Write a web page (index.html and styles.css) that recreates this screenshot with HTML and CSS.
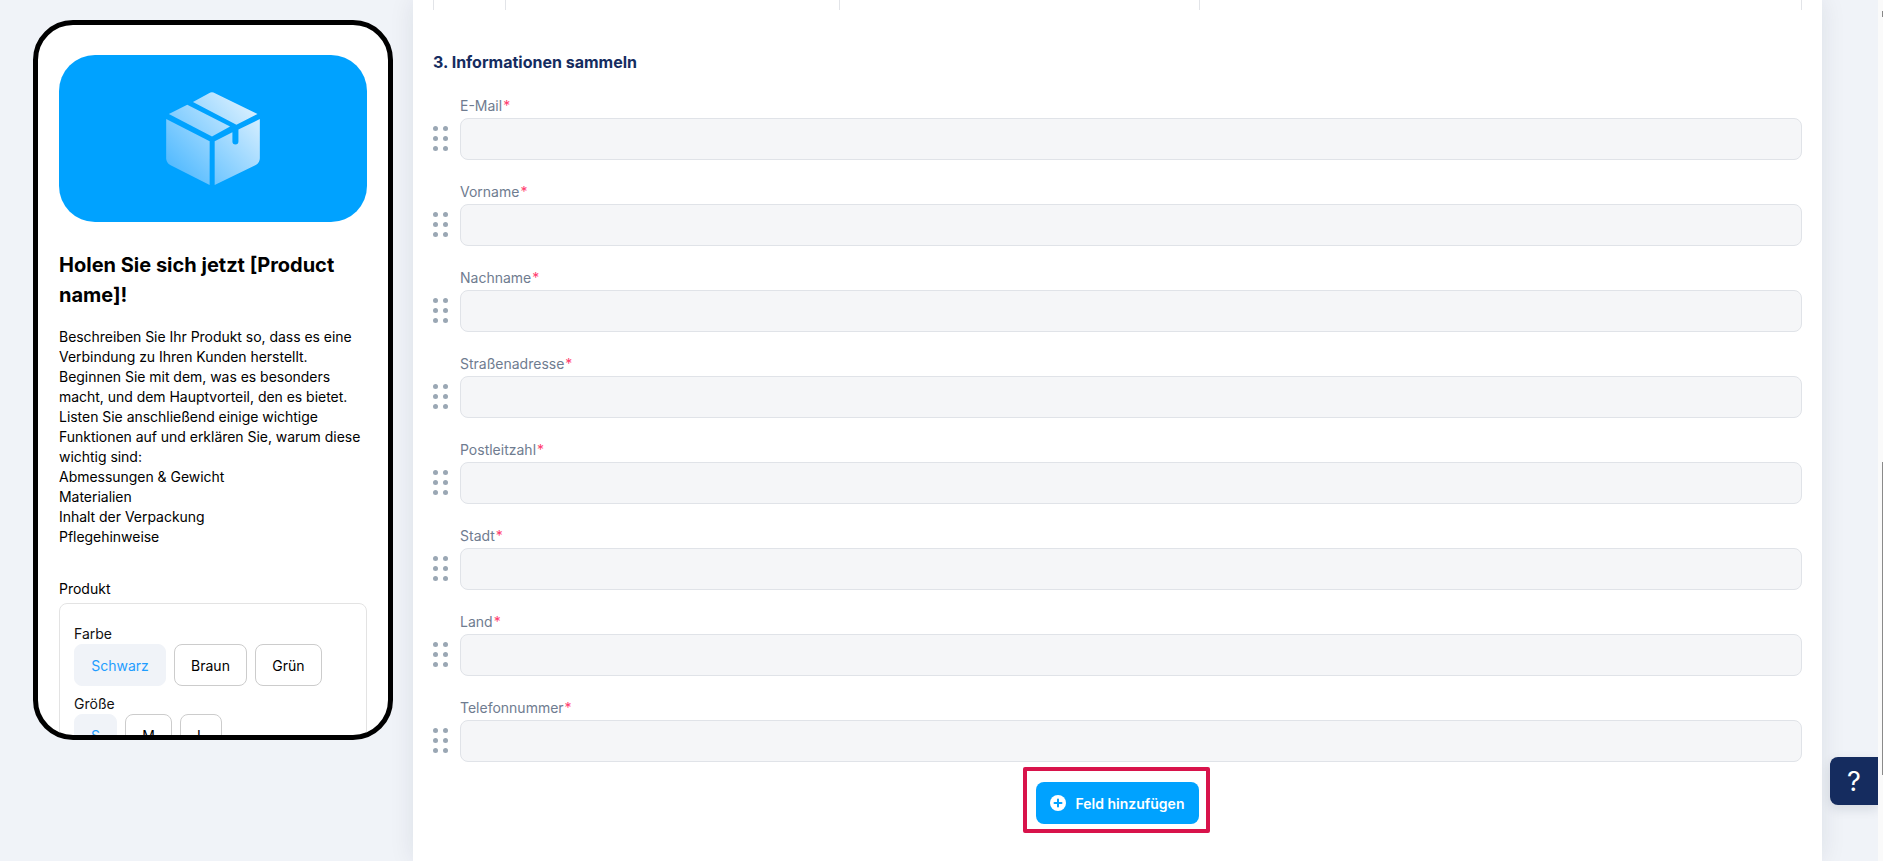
FILE: index.html
```html
<!DOCTYPE html>
<html lang="de">
<head>
<meta charset="utf-8">
<title>Informationen sammeln</title>
<link rel="stylesheet" href="styles.css">
</head>
<body>
<div class="app">
  <aside class="preview">
    <div class="phone">
      <div class="hero">
        <svg class="box-icon" viewBox="80 67 280 278" aria-hidden="true">
          <defs>
            <linearGradient id="boxGrad" gradientUnits="userSpaceOnUse" x1="90" y1="320" x2="340" y2="90">
              <stop offset="0" stop-color="#4ab7ff"/>
              <stop offset="1" stop-color="#dff2ff"/>
            </linearGradient>
          </defs>
          <path fill="url(#boxGrad)" d="M160 97 L208 71 Q217 65 226 71 L353 133 L290 165 Z"/>
          <path fill="url(#boxGrad)" d="M88 133 L143 105 L271 170 L217 200 Z"/>
          <path fill="url(#boxGrad)" d="M80 148 L210 214 V345 L92 285 Q80 278 80 265 Z"/>
          <path fill="url(#boxGrad)" d="M225 214 L278 187 V215 a9 9 0 0 0 18 0 V179 L360 148 V265 Q360 278 348 285 L225 345 Z"/>
        </svg>
      </div>
      <h2 class="title">Holen Sie sich jetzt [Product name]!</h2>
      <p class="desc">Beschreiben Sie Ihr Produkt so, dass es eine Verbindung zu Ihren Kunden herstellt. Beginnen Sie mit dem, was es besonders macht, und dem Hauptvorteil, den es bietet. Listen Sie anschließend einige wichtige Funktionen auf und erklären Sie, warum diese wichtig sind:<br>Abmessungen &amp; Gewicht<br>Materialien<br>Inhalt der Verpackung<br>Pflegehinweise</p>
      <div class="product-label">Produkt</div>
      <div class="product-box">
        <div class="opt-label">Farbe</div>
        <div class="opts">
          <span class="opt active opt-schwarz">Schwarz</span>
          <span class="opt opt-braun">Braun</span>
          <span class="opt opt-gruen">Grün</span>
        </div>
        <div class="opt-label opt-label-next">Größe</div>
        <div class="opts">
          <span class="opt active opt-s">S</span>
          <span class="opt opt-m">M</span>
          <span class="opt opt-l">L</span>
        </div>
      </div>
    </div>
  </aside>

  <main class="panel">
    <div class="table-rest">
      <span class="cell c1"></span><span class="cell c2"></span><span class="cell c3"></span><span class="cell c4"></span>
    </div>
    <h3 class="section-title">3. Informationen sammeln</h3>
    <div class="fields">
      <div class="field"><label class="field-label">E-Mail<span class="req">*</span></label><div class="field-row"><svg class="grip" viewBox="0 0 15 25"><circle cx="2.5" cy="2.5" r="2.5"/><circle cx="12.5" cy="2.5" r="2.5"/><circle cx="2.5" cy="12.5" r="2.5"/><circle cx="12.5" cy="12.5" r="2.5"/><circle cx="2.5" cy="22.5" r="2.5"/><circle cx="12.5" cy="22.5" r="2.5"/></svg><div class="input"></div></div></div>
      <div class="field"><label class="field-label">Vorname<span class="req">*</span></label><div class="field-row"><svg class="grip" viewBox="0 0 15 25"><circle cx="2.5" cy="2.5" r="2.5"/><circle cx="12.5" cy="2.5" r="2.5"/><circle cx="2.5" cy="12.5" r="2.5"/><circle cx="12.5" cy="12.5" r="2.5"/><circle cx="2.5" cy="22.5" r="2.5"/><circle cx="12.5" cy="22.5" r="2.5"/></svg><div class="input"></div></div></div>
      <div class="field"><label class="field-label">Nachname<span class="req">*</span></label><div class="field-row"><svg class="grip" viewBox="0 0 15 25"><circle cx="2.5" cy="2.5" r="2.5"/><circle cx="12.5" cy="2.5" r="2.5"/><circle cx="2.5" cy="12.5" r="2.5"/><circle cx="12.5" cy="12.5" r="2.5"/><circle cx="2.5" cy="22.5" r="2.5"/><circle cx="12.5" cy="22.5" r="2.5"/></svg><div class="input"></div></div></div>
      <div class="field"><label class="field-label">Straßenadresse<span class="req">*</span></label><div class="field-row"><svg class="grip" viewBox="0 0 15 25"><circle cx="2.5" cy="2.5" r="2.5"/><circle cx="12.5" cy="2.5" r="2.5"/><circle cx="2.5" cy="12.5" r="2.5"/><circle cx="12.5" cy="12.5" r="2.5"/><circle cx="2.5" cy="22.5" r="2.5"/><circle cx="12.5" cy="22.5" r="2.5"/></svg><div class="input"></div></div></div>
      <div class="field"><label class="field-label">Postleitzahl<span class="req">*</span></label><div class="field-row"><svg class="grip" viewBox="0 0 15 25"><circle cx="2.5" cy="2.5" r="2.5"/><circle cx="12.5" cy="2.5" r="2.5"/><circle cx="2.5" cy="12.5" r="2.5"/><circle cx="12.5" cy="12.5" r="2.5"/><circle cx="2.5" cy="22.5" r="2.5"/><circle cx="12.5" cy="22.5" r="2.5"/></svg><div class="input"></div></div></div>
      <div class="field"><label class="field-label">Stadt<span class="req">*</span></label><div class="field-row"><svg class="grip" viewBox="0 0 15 25"><circle cx="2.5" cy="2.5" r="2.5"/><circle cx="12.5" cy="2.5" r="2.5"/><circle cx="2.5" cy="12.5" r="2.5"/><circle cx="12.5" cy="12.5" r="2.5"/><circle cx="2.5" cy="22.5" r="2.5"/><circle cx="12.5" cy="22.5" r="2.5"/></svg><div class="input"></div></div></div>
      <div class="field"><label class="field-label">Land<span class="req">*</span></label><div class="field-row"><svg class="grip" viewBox="0 0 15 25"><circle cx="2.5" cy="2.5" r="2.5"/><circle cx="12.5" cy="2.5" r="2.5"/><circle cx="2.5" cy="12.5" r="2.5"/><circle cx="12.5" cy="12.5" r="2.5"/><circle cx="2.5" cy="22.5" r="2.5"/><circle cx="12.5" cy="22.5" r="2.5"/></svg><div class="input"></div></div></div>
      <div class="field"><label class="field-label">Telefonnummer<span class="req">*</span></label><div class="field-row"><svg class="grip" viewBox="0 0 15 25"><circle cx="2.5" cy="2.5" r="2.5"/><circle cx="12.5" cy="2.5" r="2.5"/><circle cx="2.5" cy="12.5" r="2.5"/><circle cx="12.5" cy="12.5" r="2.5"/><circle cx="2.5" cy="22.5" r="2.5"/><circle cx="12.5" cy="22.5" r="2.5"/></svg><div class="input"></div></div></div>
    </div>
    <div class="add-row">
      <div class="highlight">
        <button class="add-btn" type="button">
          <svg class="plus" viewBox="0 0 16 16" aria-hidden="true"><circle cx="8" cy="8" r="8" fill="#fff"/><path d="M8 4.5v7M4.5 8h7" stroke="#00a2ff" stroke-width="2" stroke-linecap="round"/></svg>
          Feld hinzufügen
        </button>
      </div>
    </div>
  </main>

  <div class="gutter">
    <div class="help">?</div>
  </div>
  <div class="scrollbar"><div class="thumb-top"></div><div class="thumb"></div></div>
</div>
</body>
</html>
```

FILE: styles.css
```css
* { box-sizing: border-box; }
html, body { margin: 0; height: 100%; overflow: hidden; }
body { background: #f0f3f8; font-family: "Inter", "Liberation Sans", sans-serif; color: #000; }
.app { display: flex; height: 861px; width: 1883px; overflow: hidden; }

.preview { flex: 0 0 413px; padding: 20px 20px 0 33px; }
.phone { width: 360px; height: 720px; border: 5px solid #000; border-radius: 40px; background: #fff; padding: 30px 21px 0; overflow: hidden; }
.hero { height: 167px; border-radius: 36px; background: #00a2ff; display: flex; align-items: center; justify-content: center; }
.box-icon { width: 94px; height: 93px; display: block; }
.title { margin: 28px 0 0; font-size: 20px; line-height: 30px; font-weight: 700; }
.desc { margin: 17px 0 0; font-size: 14px; line-height: 20px; letter-spacing: -.03px; }
.product-label { margin-top: 32px; font-size: 14px; line-height: 20px; }
.product-box { margin-top: 4px; border: 1px solid #e3e3e3; border-radius: 8px; padding: 20px 14px 0; height: 200px; }
.opt-label { font-size: 14px; line-height: 20px; color: #111; }
.opt-label-next { margin-top: 8px; }
.opts { display: flex; gap: 8px; }
.opt { height: 42px; display: flex; align-items: center; justify-content: center; font-size: 14px; font-weight: 400; border: 1px solid #ccc; border-radius: 8px; }
.opt.active { background: #f0f3f8; border-color: #f0f3f8; color: #1f9dff; }
.opt-schwarz { width: 92px; }
.opt-braun { width: 73px; }
.opt-gruen { width: 67px; }
.opt-s { width: 43px; }
.opt-m { width: 47px; }
.opt-l { width: 42px; }

.panel { flex: 0 0 1409px; height: 861px; background: #fff; padding: 0 20px 0 20px; box-shadow: 0 0 24px rgba(20, 30, 60, .09); position: relative; }
.table-rest { display: flex; height: 10px; }
.cell { display: block; height: 100%; border-left: 1px solid #e2e4e8; }
.c1 { width: 72px; }
.c2 { width: 334px; }
.c3 { width: 360px; }
.c4 { flex: 1; border-right: 1px solid #e2e4e8; }
.section-title { margin: 42px 0 0; font-size: 16px; line-height: 20px; font-weight: 700; color: #152c5f; }
.fields { margin-top: 24px; display: flex; flex-direction: column; gap: 22px; }
.field { height: 64px; }
.field-label { display: block; margin-left: 27px; height: 20px; font-size: 14px; line-height: 20px; color: #6f7c90; }
.req { color: #ff3d6e; margin-left: 1px; }
.field-row { display: flex; align-items: center; gap: 12px; margin-top: 2px; }
.grip { flex: none; width: 15px; height: 25px; fill: #9aa7b4; margin-top: -1px; }
.input { flex: 1; height: 42px; background: #f5f6f8; border: 1px solid #e0e3e8; border-radius: 8px; }
.add-row { display: flex; justify-content: center; margin-top: 5px; padding-right: 2px; }
.highlight { width: 187px; height: 66px; border: 4px solid #d8134b; border-radius: 2px; padding: 6px 0 0 1px; display: flex; align-items: center; justify-content: center; }
.add-btn { width: 163px; height: 42px; border: 0; border-radius: 8px; background: #00a2ff; color: #fff; font: 600 14px "Inter", "Liberation Sans", sans-serif; display: flex; align-items: center; justify-content: center; gap: 10px; padding: 0; }
.plus { width: 16px; height: 16px; flex: none; }

.gutter { flex: 0 0 56px; position: relative; }
.help { position: absolute; left: 8px; top: 757px; width: 48px; height: 48px; background: #152c5f; color: #fff; border-radius: 8px 0 0 8px; display: flex; align-items: center; justify-content: center; font-size: 27px; box-shadow: 0 4px 12px rgba(20, 30, 60, .12); }

.scrollbar { flex: 0 0 5px; background: #fafafa; position: relative; }
.thumb-top { position: absolute; right: 0; top: 11px; width: 1px; height: 6px; background: #888; }
.thumb { position: absolute; right: 0; top: 462px; width: 1px; height: 313px; background: #8a8a8a; }
```
